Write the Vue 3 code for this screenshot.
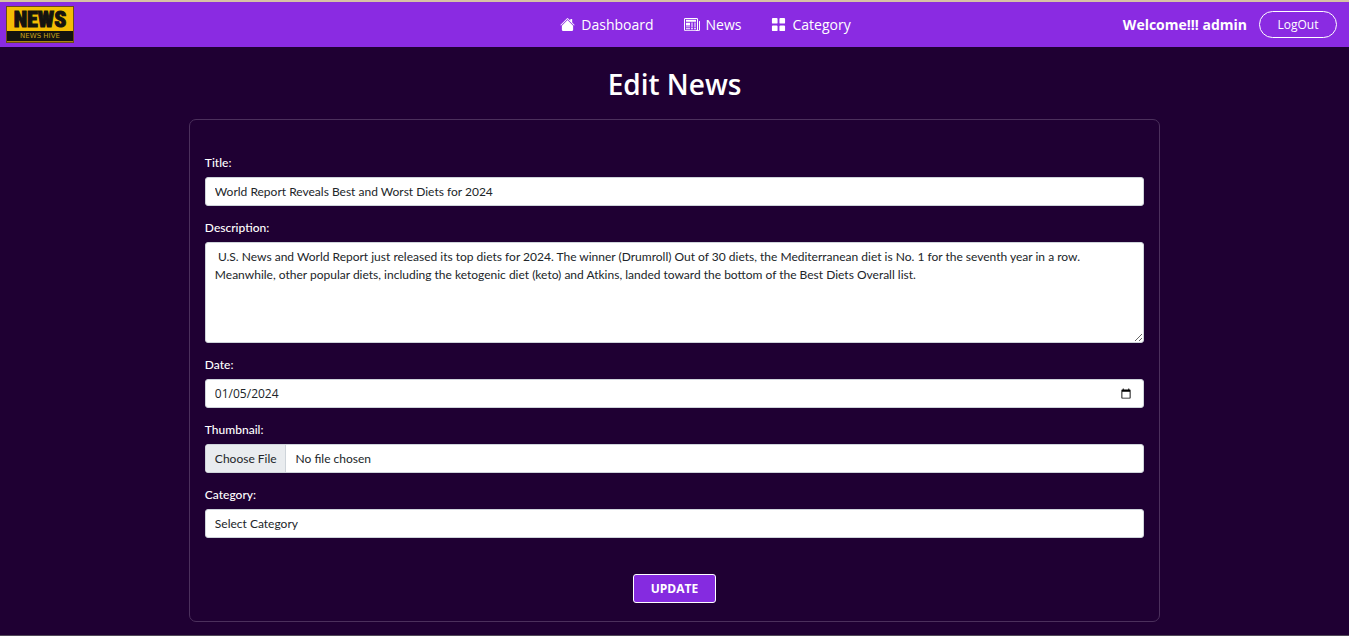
<script setup>
import { ref } from 'vue'

const title = ref('World Report Reveals Best and Worst Diets for 2024')
const description = ref(
  ' U.S. News and World Report just released its top diets for 2024. The winner (Drumroll) Out of 30 diets, the Mediterranean diet is No. 1 for the seventh year in a row. Meanwhile, other popular diets, including the ketogenic diet (keto) and Atkins, landed toward the bottom of the Best Diets Overall list.'
)
const date = ref('2024-01-05')
const category = ref('')
</script>

<template>
  <div class="page">
    <header class="navbar">
      <div class="side">
        <a class="brand" href="#" aria-label="News Hive">
          <svg width="68" height="37" viewBox="0 0 68 37">
            <rect width="68" height="37" fill="#6b4b18" />
            <rect x="1" y="1" width="66" height="24" fill="#f4bd04" />
            <rect x="1" y="25" width="66" height="10" fill="#14130f" />
            <rect x="1" y="35" width="66" height="1" fill="#a8860f" />
            <text class="logo-main" x="34" y="21" text-anchor="middle">NEWS</text>
            <text class="logo-sub" x="34" y="32" text-anchor="middle">NEWS HIVE</text>
          </svg>
        </a>
      </div>
      <nav class="links">
        <a href="#">
          <svg width="15" height="15" viewBox="0 0 16 16" fill="currentColor">
            <path d="M8.707 1.5a1 1 0 0 0-1.414 0L.646 8.146a.5.5 0 0 0 .708.708L8 2.207l6.646 6.647a.5.5 0 0 0 .708-.708L13 5.793V2.5a.5.5 0 0 0-.5-.5h-1a.5.5 0 0 0-.5.5v1.293z" />
            <path d="m8 3.293 6 6V13.500a1.500 1.500 0 0 1-1.500 1.500h-9A1.500 1.500 0 0 1 2 13.500V9.293z" />
          </svg>
          Dashboard
        </a>
        <a href="#">
          <svg width="16" height="15" viewBox="0 0 16 16" fill="currentColor" preserveAspectRatio="none">
            <path d="M0 2.500A1.500 1.500 0 0 1 1.500 1h11A1.500 1.500 0 0 1 14 2.500v10.528c0 .3-.05.654-.238.972h.738a.5.5 0 0 0 .5-.5v-9a.5.5 0 0 1 1 0v9a1.500 1.500 0 0 1-1.500 1.500H1.497A1.497 1.497 0 0 1 0 13.500zM12 14c.37 0 .654-.211.853-.441.092-.106.147-.279.147-.531V2.500a.5.5 0 0 0-.5-.5h-11a.5.5 0 0 0-.5.5v11c0 .278.223.5.497.5z" />
            <path d="M2 3h10v2H2zm0 3h4v3H2zm0 4h4v1H2zm0 2h4v1H2zm5-6h2v1H7zm3 0h2v1h-2zM7 8h2v1H7zm3 0h2v1h-2zm-3 2h2v1H7zm3 0h2v1h-2zm-3 2h2v1H7zm3 0h2v1h-2z" />
          </svg>
          News
        </a>
        <a href="#">
          <svg width="15" height="15" viewBox="0 0 16 16" fill="currentColor">
            <rect x="1" y="1" width="6" height="6" rx="1" />
            <rect x="9" y="1" width="6" height="6" rx="1" />
            <rect x="1" y="9" width="6" height="6" rx="1" />
            <rect x="9" y="9" width="6" height="6" rx="1" />
          </svg>
          Category
        </a>
      </nav>
      <div class="side user">
        <strong>Welcome!!! admin</strong>
        <button type="button" class="logout">LogOut</button>
      </div>
    </header>

    <main>
      <h1>Edit News</h1>
      <form class="card" @submit.prevent>
        <label for="title">Title:</label>
        <input id="title" v-model="title" class="control" type="text" />
        <label for="description">Description:</label>
        <textarea id="description" v-model="description" class="control area" spellcheck="false"></textarea>
        <label for="date">Date:</label>
        <input id="date" v-model="date" class="control date" type="date" />
        <label for="thumbnail">Thumbnail:</label>
        <input id="thumbnail" class="control file" type="file" />
        <label for="category">Category:</label>
        <select id="category" v-model="category" class="control">
          <option value="">Select Category</option>
        </select>
        <button type="submit" class="update">UPDATE</button>
      </form>
    </main>
  </div>
</template>

<style>
body {
  margin: 0;
  background: #1f0033;
}
</style>

<style scoped>
.page {
  box-sizing: border-box;
  min-height: 100vh;
  border-top: 2px solid #d6c3a5;
  border-bottom: 1px solid #514858;
  background: #1f0033;
  color: #fff;
  font-family: "Segoe UI", "Open Sans", "Noto Sans", sans-serif;
  font-size: 12px;
}
.navbar {
  box-sizing: border-box;
  display: flex;
  align-items: center;
  min-height: 45px;
  padding: 0 12px 0 6px;
  background: #8a2be2;
}
.side {
  flex: 1;
  display: flex;
  align-items: center;
}
.brand,
.brand svg {
  display: block;
}
.logo-main {
  font-family: "Roboto Condensed", "Open Sans Condensed", "Roboto", sans-serif;
  font-weight: 900;
  font-size: 22px;
  fill: #14130f;
  stroke: #14130f;
  stroke-width: 1px;
}
.logo-sub {
  font-family: "DejaVu Sans", sans-serif;
  font-size: 7px;
  fill: #c9a21a;
}
.links {
  display: flex;
  gap: 30px;
  padding-left: 68px;
}
.links a {
  display: flex;
  align-items: center;
  gap: 6px;
  color: #fff;
  font-size: 14px;
  line-height: 24px;
  text-decoration: none;
}
.user {
  justify-content: flex-end;
  gap: 12px;
}
.user strong {
  font-size: 14px;
  font-weight: 700;
}
.logout {
  box-sizing: border-box;
  width: 78px;
  height: 27px;
  padding: 0;
  border: 1px solid #fff;
  border-radius: 14px;
  background: transparent;
  color: #fff;
  font: inherit;
}
h1 {
  margin: 0;
  padding: 19px 0 17px;
  font-size: 28px;
  font-weight: 600;
  line-height: 36px;
  text-align: center;
}
.card {
  box-sizing: border-box;
  display: flex;
  flex-direction: column;
  width: 72%;
  margin: 0 auto;
  padding: 33px 15px 18px;
  border: 1px solid #4b305c;
  border-radius: 7px;
  font-family: "Segoe UI", "Lato", sans-serif;
}
label {
  align-self: flex-start;
  margin-bottom: 4px;
  font-weight: 500;
  line-height: 20px;
}
.control {
  box-sizing: border-box;
  width: 100%;
  height: 29px;
  margin: 0 0 12px;
  padding: 4px 9px;
  border: 1px solid #ced4da;
  border-radius: 3px;
  appearance: none;
  background: #fff;
  color: #212529;
  font: inherit;
  line-height: 18px;
}
.area {
  height: 101px;
  padding: 5px 9px;
  resize: vertical;
}
.date {
  font-family: "Segoe UI", "Open Sans", sans-serif;
}
.date::-webkit-datetime-edit-month-field,
.date::-webkit-datetime-edit-day-field,
.date::-webkit-datetime-edit-year-field {
  padding: 0;
}
.file {
  padding: 0;
  line-height: 27px;
  overflow: hidden;
}
.file::file-selector-button {
  height: 27px;
  margin: 0 10px 0 0;
  padding: 0 8px 0 9px;
  border: 0;
  border-right: 1px solid #ced4da;
  background: #e9ecef;
  color: #212529;
  font: inherit;
}
.update {
  align-self: center;
  box-sizing: border-box;
  width: 83px;
  height: 29px;
  margin-top: 24px;
  padding: 0;
  border: 1px solid #fff;
  border-radius: 3px;
  background: #852be0;
  color: #fff;
  font-family: "Segoe UI", "Open Sans", sans-serif;
  font-size: 12px;
  font-weight: 700;
}
</style>
